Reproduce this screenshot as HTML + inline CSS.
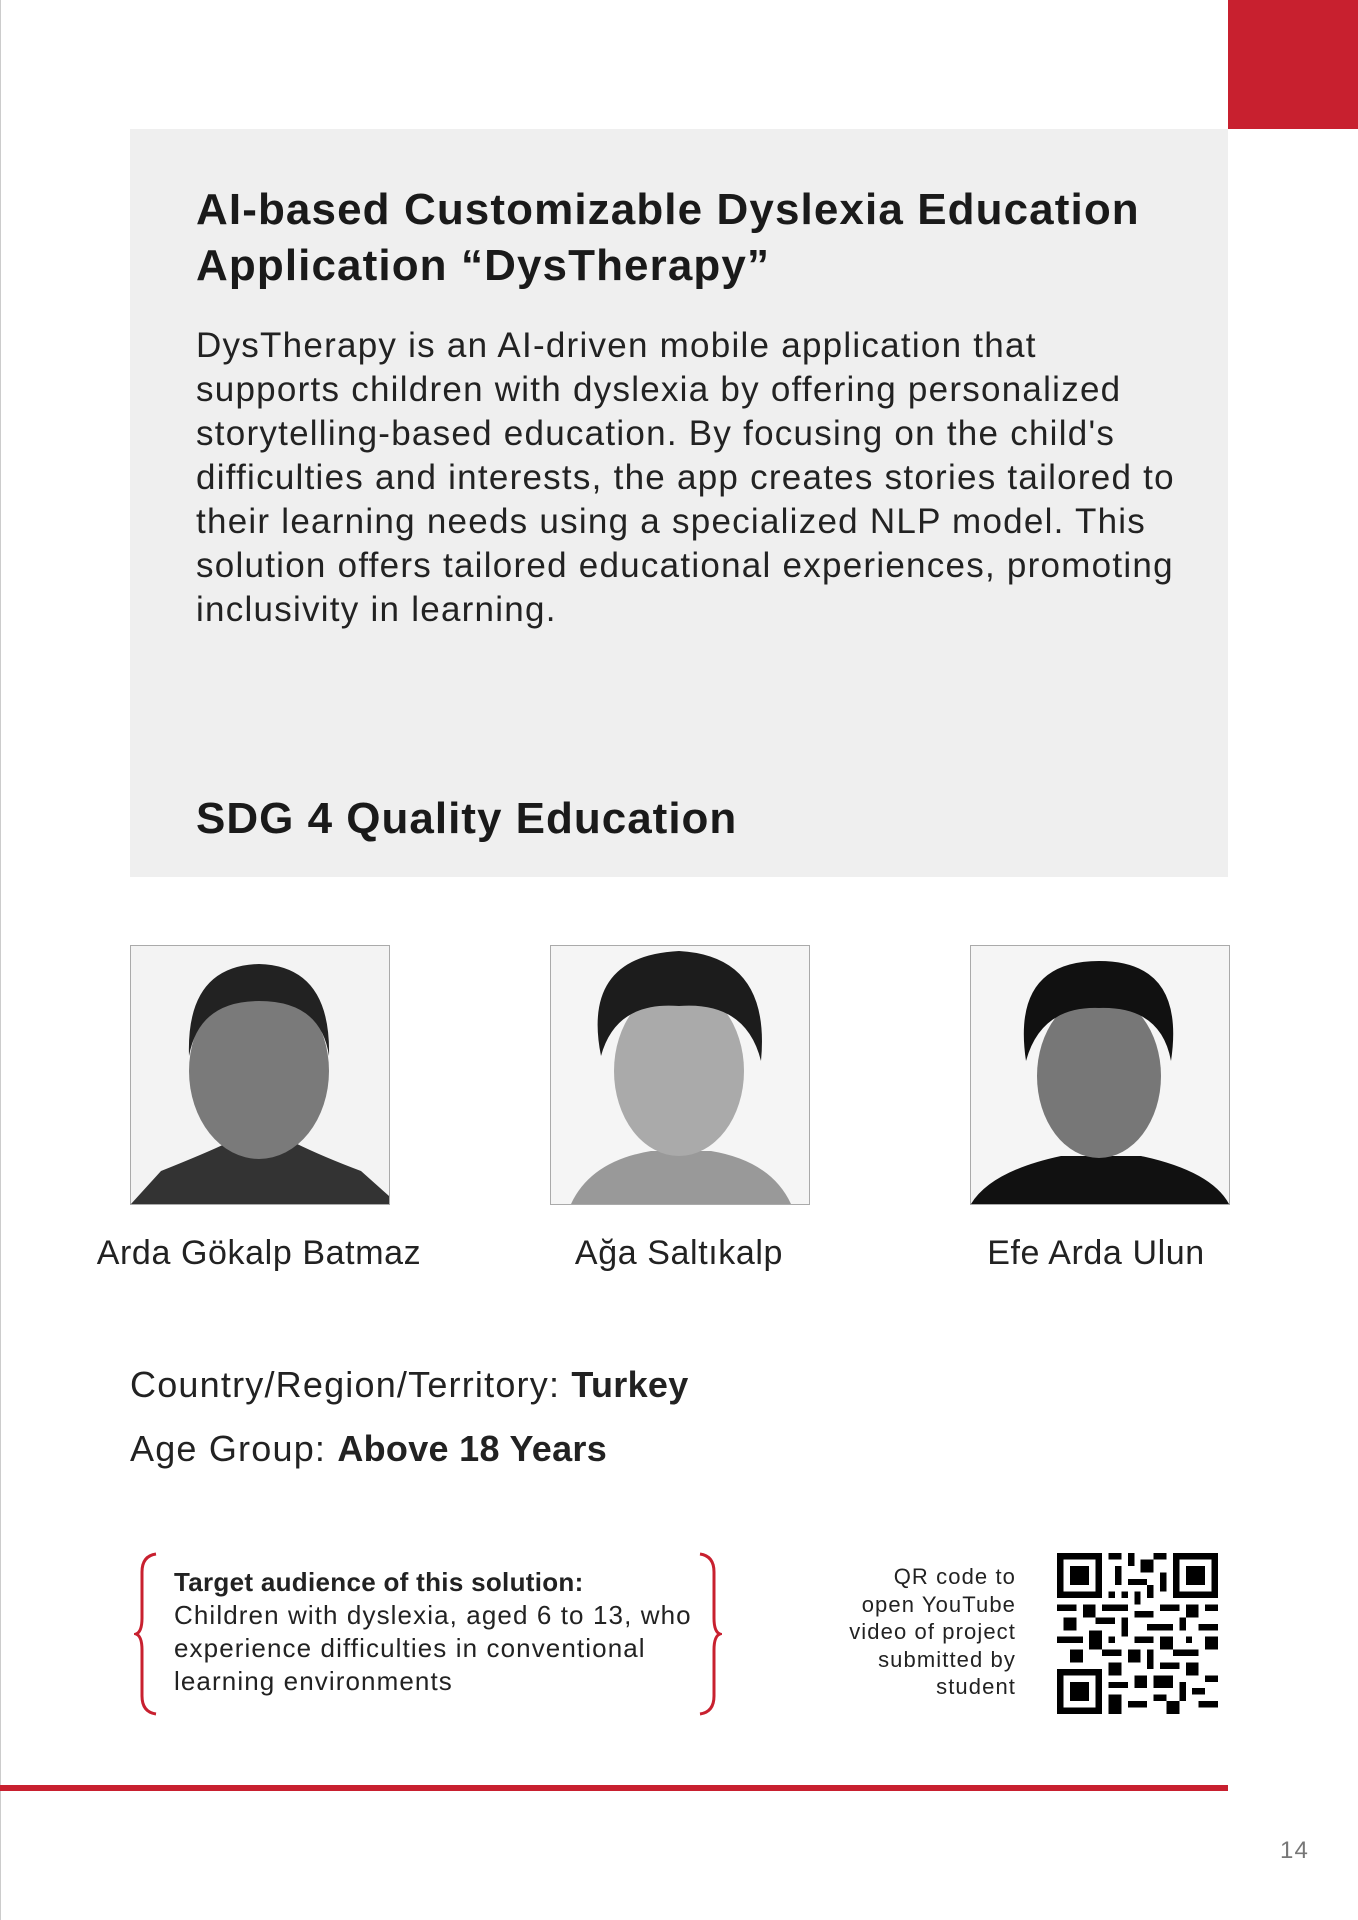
<!DOCTYPE html>
<html><head><meta charset="utf-8"><style>
body{margin:0;width:1358px;height:1920px;position:relative;background:#fff;font-family:"Liberation Sans",sans-serif;color:#1a1a1a;overflow:hidden;letter-spacing:1.1px}
.a{position:absolute}
.red{background:#c8202f}
h1{position:absolute;left:196px;top:182px;margin:0;font-size:44px;line-height:56px;font-weight:bold;letter-spacing:1.1px}
.body{left:196px;top:324px;font-size:35px;line-height:44px;color:#222;width:1100px;letter-spacing:1.25px}
.ph{border:1px solid #aaa;width:258px;height:258px;background:#f4f4f4;overflow:hidden}
.nm{font-size:34px;width:400px;text-align:center;color:#222;letter-spacing:0.6px}
.info{left:130px;font-size:36px;color:#222;letter-spacing:1.2px}
.info b{letter-spacing:0.3px}
</style></head><body>
<div class="a" style="left:0;top:0;width:1px;height:1920px;background:#ccc"></div>
<div class="a red" style="left:1228px;top:0;width:130px;height:129px"></div>
<div class="a" style="left:130px;top:129px;width:1098px;height:748px;background:#efefef"></div>
<h1>AI-based Customizable Dyslexia Education<br>Application “DysTherapy”</h1>
<div class="a body">DysTherapy is an AI-driven mobile application that<br>supports children with dyslexia by offering personalized<br>storytelling-based education. By focusing on the child's<br>difficulties and interests, the app creates stories tailored to<br>their learning needs using a specialized NLP model. This<br>solution offers tailored educational experiences, promoting<br>inclusivity in learning.</div>
<div class="a" style="left:196px;top:794px;font-size:44px;font-weight:bold;letter-spacing:1px">SDG 4 Quality Education</div>

<div class="a ph" style="left:130px;top:945px"><svg width="258" height="258"><rect width="258" height="258" fill="#f3f3f3"/><path d="M0 258 L30 225 Q80 205 100 195 L160 195 Q190 210 230 225 L258 250 V258Z" fill="#333"/><ellipse cx="128" cy="125" rx="70" ry="88" fill="#7a7a7a"/><path d="M58 110 Q55 20 128 18 Q200 20 198 110 Q190 55 128 55 Q68 55 58 110Z" fill="#222"/></svg></div>
<div class="a ph" style="left:550px;top:945px"><svg width="258" height="258"><rect width="258" height="258" fill="#f5f5f5"/><path d="M20 258 Q40 215 100 205 L160 205 Q220 215 240 258Z" fill="#999"/><ellipse cx="128" cy="125" rx="65" ry="85" fill="#aaa"/><path d="M50 110 Q30 10 128 5 Q220 10 210 115 Q195 55 128 60 Q65 55 50 110Z" fill="#1c1c1c"/></svg></div>
<div class="a ph" style="left:970px;top:945px"><svg width="258" height="258"><rect width="258" height="258" fill="#f5f5f5"/><path d="M0 258 Q20 225 90 210 L170 210 Q240 225 258 258Z" fill="#111"/><ellipse cx="128" cy="130" rx="62" ry="82" fill="#777"/><path d="M55 115 Q40 15 128 15 Q215 15 200 115 Q190 60 128 62 Q70 60 55 115Z" fill="#111"/></svg></div>
<div class="a nm" style="left:59px;top:1234px">Arda Gökalp Batmaz</div>
<div class="a nm" style="left:479px;top:1234px">Ağa Saltıkalp</div>
<div class="a nm" style="left:896px;top:1234px">Efe Arda Ulun</div>

<div class="a info" style="top:1364px">Country/Region/Territory: <b>Turkey</b></div>
<div class="a info" style="top:1428px">Age Group: <b>Above 18 Years</b></div>

<svg class="a" style="left:134px;top:1552px" width="26" height="164"><path d="M22 2 Q8 4 8 20 V66 Q8 80 2 82 Q8 84 8 98 V144 Q8 160 22 162" fill="none" stroke="#c8202f" stroke-width="3"/></svg>
<svg class="a" style="left:696px;top:1552px" width="26" height="164"><path d="M4 2 Q18 4 18 20 V66 Q18 80 24 82 Q18 84 18 98 V144 Q18 160 4 162" fill="none" stroke="#c8202f" stroke-width="3"/></svg>
<div class="a" style="left:174px;top:1566px;font-size:26px;line-height:33px;color:#222;letter-spacing:1.1px"><b style="letter-spacing:0.3px">Target audience of this solution:</b><br>Children with dyslexia, aged 6 to 13, who<br>experience difficulties in conventional<br>learning environments</div>
<div class="a" style="left:780px;top:1563px;width:236px;text-align:right;font-size:22px;line-height:27.5px;color:#222;letter-spacing:1.1px">QR code to<br>open YouTube<br>video of project<br>submitted by<br>student</div>
<svg class="a" style="left:1057px;top:1553px" width="161" height="161" viewBox="0 0 25 25" shape-rendering="crispEdges">
<g fill="#000">
<path d="M0 0h7v7h-7zM18 0h7v7h-7zM0 18h7v7h-7z"/>
</g>
<g fill="#fff"><path d="M1 1h5v5h-5zM19 1h5v5h-5zM1 19h5v5h-5z"/></g>
<g fill="#000"><path d="M2 2h3v3h-3zM20 2h3v3h-3zM2 20h3v3h-3z"/>
<path d="M8 0h2v1h-2zM11 0h1v2h-1zM13 1h2v2h-2zM9 2h1v3h-1zM15 0h2v1h-2zM11 4h3v1h-3zM16 3h1v3h-1zM8 6h1v1h-1zM10 6h1v1h-1zM12 6h1v2h-1zM14 5h1v2h-1zM0 8h3v1h-3zM4 8h2v2h-2zM7 8h4v1h-4zM12 9h3v1h-3zM16 8h3v1h-3zM20 8h2v2h-2zM23 8h2v1h-2zM1 10h2v2h-2zM6 10h3v1h-3zM10 10h1v3h-1zM14 11h4v1h-4zM19 10h1v2h-1zM22 11h3v1h-3zM0 13h4v1h-4zM5 12h2v3h-2zM8 13h1v1h-1zM12 13h3v1h-3zM16 13h2v2h-2zM20 13h1v1h-1zM23 13h2v2h-2zM2 15h2v2h-2zM7 15h3v1h-3zM11 15h2v2h-2zM14 15h1v3h-1zM18 15h4v1h-4zM8 17h2v2h-2zM16 17h3v1h-3zM20 17h2v2h-2zM8 20h3v1h-3zM12 19h2v2h-2zM15 19h3v2h-3zM19 20h1v3h-1zM21 21h2v1h-2zM8 22h2v3h-2zM11 23h3v1h-3zM15 22h2v1h-2zM17 23h2v2h-2zM22 23h3v1h-3zM23 19h2v1h-2z"/></g>
</svg>

<div class="a red" style="left:0;top:1785px;width:1228px;height:6px"></div>
<div class="a" style="left:1280px;top:1837px;font-size:24px;color:#777">14</div>
</body></html>
